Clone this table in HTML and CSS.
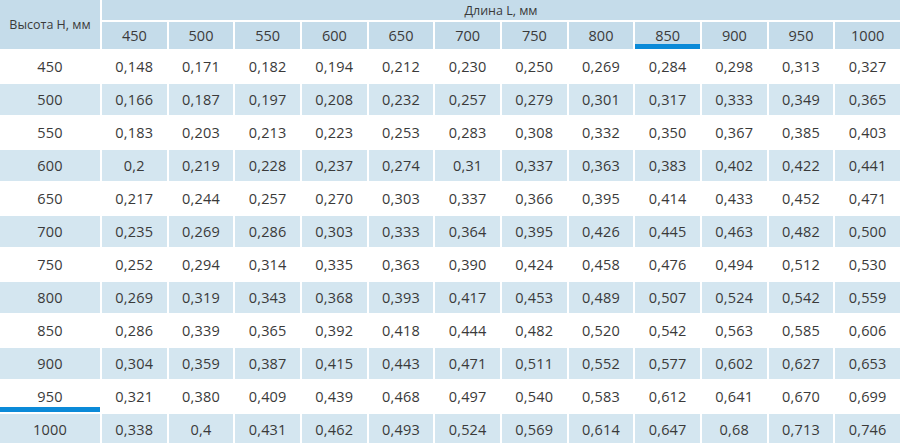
FILE: index.html
```html
<!DOCTYPE html>
<html lang="ru">
<head>
<meta charset="utf-8">
<title>Таблица</title>
<link rel="stylesheet" href="styles.css">
</head>
<body>
<div class="grid">
  <div class="hcell corner">Высота H, мм</div>
  <div class="hcell span">Длина L, мм</div>
  <div class="hcell">450</div><div class="hcell">500</div><div class="hcell">550</div><div class="hcell">600</div><div class="hcell">650</div><div class="hcell">700</div><div class="hcell">750</div><div class="hcell">800</div><div class="hcell mark">850</div><div class="hcell">900</div><div class="hcell">950</div><div class="hcell">1000</div>

  <div class="row"><div class="c">450</div><div class="c">0,148</div><div class="c">0,171</div><div class="c">0,182</div><div class="c">0,194</div><div class="c">0,212</div><div class="c">0,230</div><div class="c">0,250</div><div class="c">0,269</div><div class="c">0,284</div><div class="c">0,298</div><div class="c">0,313</div><div class="c">0,327</div></div>
  <div class="row alt"><div class="c">500</div><div class="c">0,166</div><div class="c">0,187</div><div class="c">0,197</div><div class="c">0,208</div><div class="c">0,232</div><div class="c">0,257</div><div class="c">0,279</div><div class="c">0,301</div><div class="c">0,317</div><div class="c">0,333</div><div class="c">0,349</div><div class="c">0,365</div></div>
  <div class="row"><div class="c">550</div><div class="c">0,183</div><div class="c">0,203</div><div class="c">0,213</div><div class="c">0,223</div><div class="c">0,253</div><div class="c">0,283</div><div class="c">0,308</div><div class="c">0,332</div><div class="c">0,350</div><div class="c">0,367</div><div class="c">0,385</div><div class="c">0,403</div></div>
  <div class="row alt"><div class="c">600</div><div class="c">0,2</div><div class="c">0,219</div><div class="c">0,228</div><div class="c">0,237</div><div class="c">0,274</div><div class="c">0,31</div><div class="c">0,337</div><div class="c">0,363</div><div class="c">0,383</div><div class="c">0,402</div><div class="c">0,422</div><div class="c">0,441</div></div>
  <div class="row"><div class="c">650</div><div class="c">0,217</div><div class="c">0,244</div><div class="c">0,257</div><div class="c">0,270</div><div class="c">0,303</div><div class="c">0,337</div><div class="c">0,366</div><div class="c">0,395</div><div class="c">0,414</div><div class="c">0,433</div><div class="c">0,452</div><div class="c">0,471</div></div>
  <div class="row alt"><div class="c">700</div><div class="c">0,235</div><div class="c">0,269</div><div class="c">0,286</div><div class="c">0,303</div><div class="c">0,333</div><div class="c">0,364</div><div class="c">0,395</div><div class="c">0,426</div><div class="c">0,445</div><div class="c">0,463</div><div class="c">0,482</div><div class="c">0,500</div></div>
  <div class="row"><div class="c">750</div><div class="c">0,252</div><div class="c">0,294</div><div class="c">0,314</div><div class="c">0,335</div><div class="c">0,363</div><div class="c">0,390</div><div class="c">0,424</div><div class="c">0,458</div><div class="c">0,476</div><div class="c">0,494</div><div class="c">0,512</div><div class="c">0,530</div></div>
  <div class="row alt"><div class="c">800</div><div class="c">0,269</div><div class="c">0,319</div><div class="c">0,343</div><div class="c">0,368</div><div class="c">0,393</div><div class="c">0,417</div><div class="c">0,453</div><div class="c">0,489</div><div class="c">0,507</div><div class="c">0,524</div><div class="c">0,542</div><div class="c">0,559</div></div>
  <div class="row"><div class="c">850</div><div class="c">0,286</div><div class="c">0,339</div><div class="c">0,365</div><div class="c">0,392</div><div class="c">0,418</div><div class="c">0,444</div><div class="c">0,482</div><div class="c">0,520</div><div class="c">0,542</div><div class="c">0,563</div><div class="c">0,585</div><div class="c">0,606</div></div>
  <div class="row alt"><div class="c">900</div><div class="c">0,304</div><div class="c">0,359</div><div class="c">0,387</div><div class="c">0,415</div><div class="c">0,443</div><div class="c">0,471</div><div class="c">0,511</div><div class="c">0,552</div><div class="c">0,577</div><div class="c">0,602</div><div class="c">0,627</div><div class="c">0,653</div></div>
  <div class="row"><div class="c mark">950</div><div class="c">0,321</div><div class="c">0,380</div><div class="c">0,409</div><div class="c">0,439</div><div class="c">0,468</div><div class="c">0,497</div><div class="c">0,540</div><div class="c">0,583</div><div class="c">0,612</div><div class="c">0,641</div><div class="c">0,670</div><div class="c">0,699</div></div>
  <div class="row alt"><div class="c">1000</div><div class="c">0,338</div><div class="c">0,4</div><div class="c">0,431</div><div class="c">0,462</div><div class="c">0,493</div><div class="c">0,524</div><div class="c">0,569</div><div class="c">0,614</div><div class="c">0,647</div><div class="c">0,68</div><div class="c">0,713</div><div class="c">0,746</div></div>
</div>
</body>
</html>
```

FILE: styles.css
```css
html, body {
  margin: 0;
  padding: 0;
  background: #ffffff;
}

body {
  font-family: "Open Sans", "Noto Sans", sans-serif;
  color: #3a3a3a;
  overflow: hidden;
}

.grid {
  display: grid;
  width: 900px;
  grid-template-columns: 100px repeat(12, 1fr);
  grid-template-rows: 20px 27px repeat(12, 31px);
  gap: 2px;
}

.row {
  display: contents;
}

.hcell {
  background: #c5dcea;
  display: flex;
  align-items: center;
  justify-content: center;
  font-size: 14.5px;
}

.corner {
  grid-row: 1 / span 2;
  grid-column: 1;
  font-size: 12.5px;
  padding-bottom: 1px;
}

.span {
  grid-column: 2 / span 12;
  font-size: 12.5px;
  padding-top: 1px;
}

.c {
  display: flex;
  align-items: center;
  justify-content: center;
  font-size: 14.5px;
  letter-spacing: 0.2px;
}

.alt .c {
  background: #d4e6f0;
}

.mark {
  box-shadow: inset 0 -5px 0 #0b8ad8;
}
```
